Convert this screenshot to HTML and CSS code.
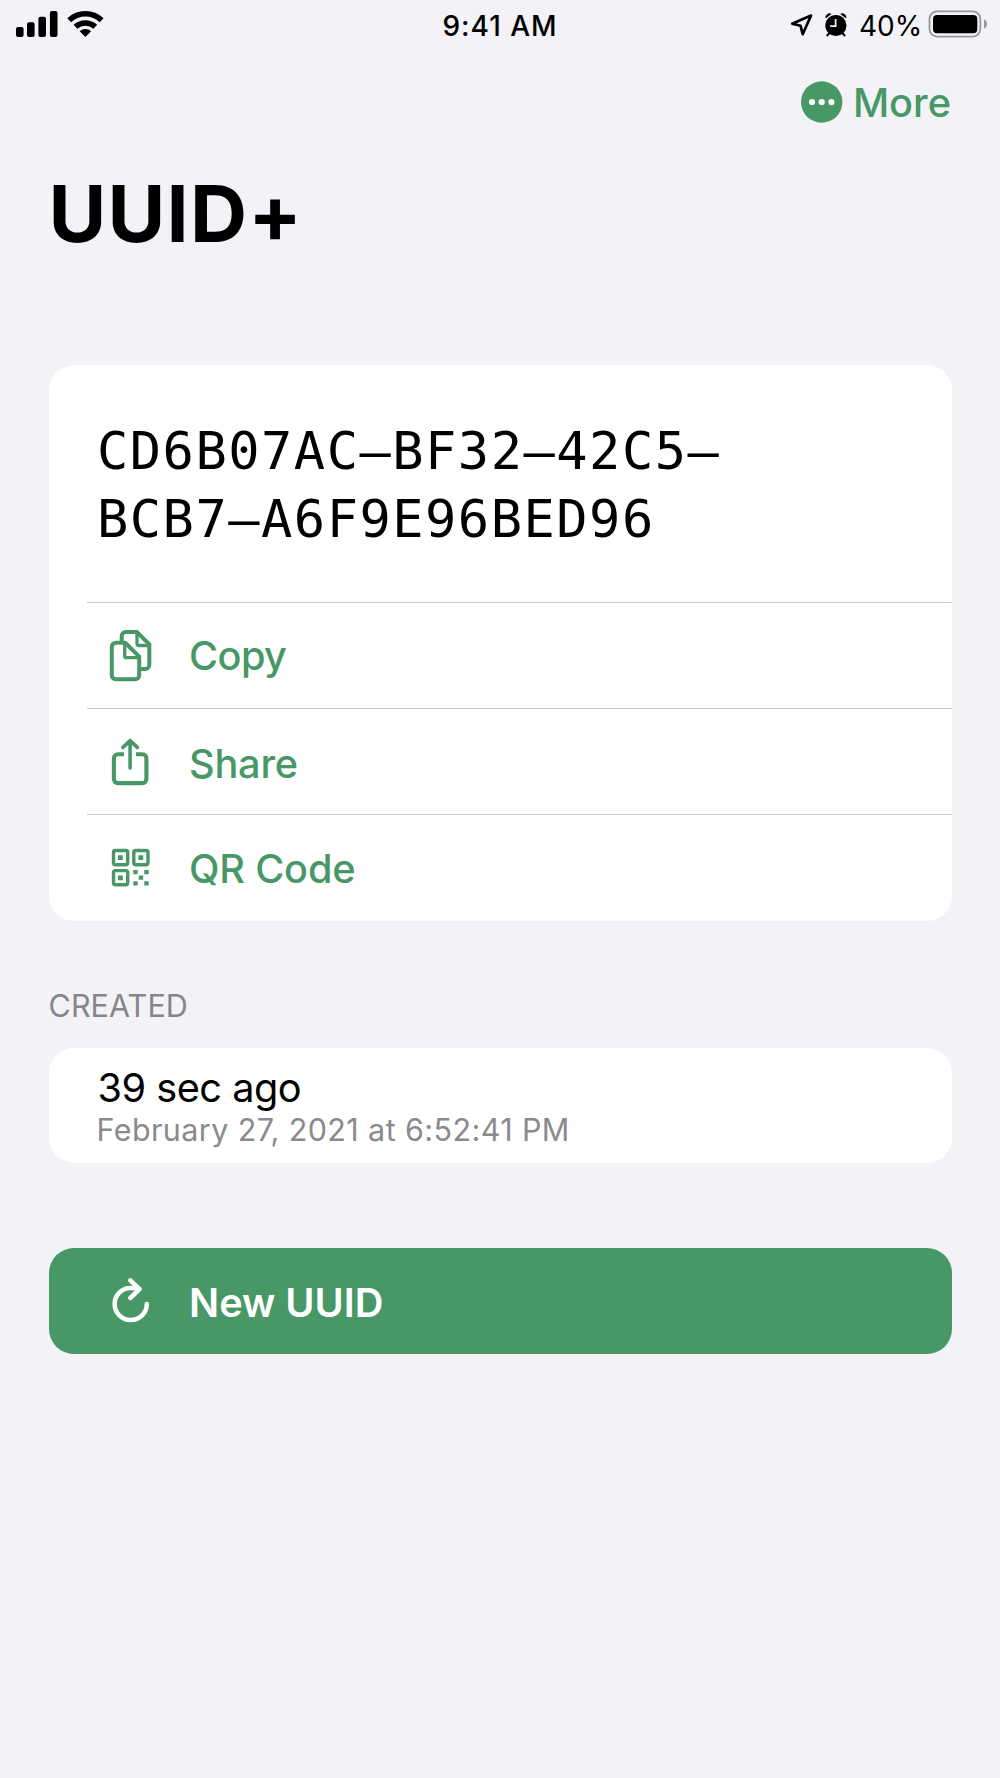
FILE: index.html
```html
<!DOCTYPE html>
<html lang="en">
<head>
    <meta charset="UTF-8">
    <meta name="viewport" content="width=device-width, initial-scale=1.0">
    <title>UUID+</title>
    <link rel="stylesheet" href="styles.css">
</head>
<body>
    <div class="status-bar">
        <svg class="signal" width="110" height="50" viewBox="0 0 110 50">
            <rect x="16" y="27" width="7.6" height="10" rx="2"/>
            <rect x="27" y="22.3" width="7.6" height="14.7" rx="2"/>
            <rect x="38.4" y="16.7" width="7.6" height="20.3" rx="2"/>
            <rect x="49.9" y="11" width="7.6" height="26" rx="2"/>
            <path class="wave" d="M69.2 20.2a23.6 23.6 0 0 1 32.4 0M75.5 26.8a14.6 14.6 0 0 1 19.8 0"/>
            <path d="M85.4 37l-5.7-5.7a8.3 8.3 0 0 1 11.4 0z"/>
        </svg>
        <div class="time">9:41 AM</div>
        <div class="status-right">
            <svg width="70" height="50" viewBox="788 0 70 50">
                <path class="location" d="M811 15.6L802.7 34.2L800.6 25.8L792.2 23.7z"/>
                <circle cx="835.9" cy="25.5" r="10.6"/>
                <path d="M825.6 18.6a4 4 0 0 1 6-4.6zM846.2 18.6a4 4 0 0 0-6-4.6z"/>
                <path class="legs" d="M829.5 33l-2.2 2.4M842.3 33l2.2 2.4"/>
                <path class="hands" d="M835.6 19v7.2h-5.4"/>
            </svg>
            <span class="percent">40%</span>
            <svg class="battery" width="62" height="50" viewBox="926 0 62 50">
                <rect class="shell" x="929.5" y="11.4" width="50.8" height="25.2" rx="7.5"/>
                <rect x="933" y="15" width="44.3" height="18.2" rx="4"/>
                <path class="nub" d="M984 19.4q3 1.2 3 4.6t-3 4.6z"/>
            </svg>
        </div>
    </div>

    <div class="nav">
        <svg width="42" height="42" viewBox="0 0 42 42">
            <circle cx="20.7" cy="21" r="20.7" fill="#479866"/>
            <g fill="#fff">
                <circle cx="11" cy="21" r="3.1"/>
                <circle cx="20.7" cy="21" r="3.1"/>
                <circle cx="30.4" cy="21" r="3.1"/>
            </g>
        </svg>
        <span class="more">More</span>
    </div>
    <h1>UUID+</h1>

    <div class="card main-card">
        <div class="uuid">CD6B07AC–BF32–42C5–<br>BCB7–A6F9E96BED96</div>
        <div class="row copy">
            <svg class="icon" viewBox="0 0 60 60" stroke-width="4">
                <path d="M15.8 17.8h9.4L39.2 31.5V50.2a4 4 0 0 1-4 4H15.8a4 4 0 0 1-4-4V21.8a4 4 0 0 1 4-4z"/>
                <path d="M24.7 18v12.7a2 2 0 0 0 2 2H39" stroke-width="3.3"/>
                <path d="M21.7 17V11a4 4 0 0 1 4-4h11.2L49.3 19.4V40a4 4 0 0 1-4 4H40"/>
                <path d="M37 7.5v11a2 2 0 0 0 2 2h10" stroke-width="3.3"/>
            </svg>
            <span>Copy</span>
        </div>
        <div class="row share">
            <svg class="icon" viewBox="0 0 60 60" stroke-width="4.1">
                <path d="M24 23.2h-6.1a4 4 0 0 0-4 4v20.9a4 4 0 0 0 4 4h24.5a4 4 0 0 0 4-4V27.2a4 4 0 0 0-4-4H36"/>
                <path d="M30.1 37V10.2M22.9 16.4l7.2-6.8 7.2 6.8" stroke-width="3.6" stroke-linecap="round" stroke-linejoin="round"/>
            </svg>
            <span>Share</span>
        </div>
        <div class="row qr">
            <svg class="icon" viewBox="0 0 60 60" stroke-width="3.4">
                <rect x="13.5" y="13.5" width="14.2" height="14.2" rx="2"/>
                <rect x="33.8" y="13.5" width="14.2" height="14.2" rx="2"/>
                <rect x="13.5" y="33.6" width="14.2" height="14.2" rx="2"/>
                <path class="dots" d="M18 18.2h4.8v4.8H18zM38.4 18.2h4.8v4.8h-4.8zM18 38.4h4.8v4.8H18zM33.3 33h4.4v4.2h-4.4zM44.3 33h4.4v4.2h-4.4zM38.8 38.6h4.4v4.2h-4.4zM33.3 44.2h4.4v4.2h-4.4zM44.3 44.2h4.4v4.2h-4.4z"/>
            </svg>
            <span>QR Code</span>
        </div>
    </div>

    <div class="section-title">CREATED</div>
    <div class="card created">
        <div class="ago">39 sec ago</div>
        <div class="date">February 27, 2021 at 6:52:41 PM</div>
    </div>

    <div class="new-uuid">
        <svg class="icon" viewBox="0 0 60 60" stroke-width="4.5" stroke-linecap="round" stroke-linejoin="round">
            <path d="M46.8 33a16.1 16.1 0 1 1-16.1-16.1q4.5 0 8.5.8"/>
            <path d="M30.3 9.3l9.3 8.8-9.3 8.9"/>
        </svg>
        <span>New UUID</span>
    </div>
</body>
</html>
```
FILE: styles.css
```css
*{
    box-sizing: border-box;
}
body{
    margin: 0;
    background-color: #f2f2f7;
    color: #000;
    font-family: Inter, "Liberation Sans", sans-serif;
}
svg{
    display: block;
    flex: none;
}
.status-bar{
    display: grid;
    grid-template-columns: 1fr auto 1fr;
    height: 50px;
    line-height: 52px;
    font-size: 28px;
}
.wave{
    fill: none;
    stroke: #000;
    stroke-width: 5.6;
}
.time{
    font-weight: 500;
    letter-spacing: 0.95px;
}
.status-right{
    display: flex;
    justify-content: flex-end;
    padding-right: 12px;
}
.percent{
    width: 68px;
    padding-left: 1px;
}
.location{
    fill: none;
    stroke: #000;
    stroke-width: 2.7;
    stroke-linejoin: round;
}
.legs{
    stroke: #000;
    stroke-width: 2;
    stroke-linecap: round;
}
.hands{
    fill: none;
    stroke: #f2f2f7;
    stroke-width: 1.8;
}
.shell{
    fill: none;
    stroke: #97979b;
    stroke-width: 1.8;
}
.nub{
    fill: #97979b;
}
.nav{
    display: flex;
    align-items: center;
    justify-content: flex-end;
    height: 104px;
    padding-right: 49px;
    color: #479866;
}
.more{
    margin-left: 10px;
    padding-top: 2px;
    font-size: 39.7px;
    font-weight: 500;
}
h1{
    margin: 0 0 0 48.5px;
    height: 211px;
    line-height: 118px;
    font-size: 79px;
    font-weight: 700;
    letter-spacing: 1.2px;
    font-feature-settings: "calt" 0;
}
.card{
    margin: 0 48.5px;
    background-color: #fff;
    border-radius: 25px;
    overflow: hidden;
}
.main-card{
    height: 556px;
}
.uuid{
    height: 237px;
    padding: 53px 0 0 48.5px;
    font-family: "DejaVu Sans Mono", monospace;
    font-size: 52px;
    line-height: 67.6px;
    letter-spacing: 1.5px;
}
.row{
    display: flex;
    align-items: center;
    height: 106px;
    margin-left: 38.5px;
    padding-left: 13px;
    border-top: 1px solid #c8c8ca;
    color: #479866;
    font-size: 39.7px;
    font-weight: 500;
    letter-spacing: -0.2px;
}
.icon{
    width: 60px;
    height: 60px;
    margin-right: 29px;
    fill: none;
    stroke: currentColor;
}
.row .icon{
    margin-bottom: 2px;
}
.copy span{
    letter-spacing: -0.6px;
}
.share span{
    padding-top: 4px;
}
.qr span{
    padding-top: 2px;
}
.dots{
    fill: currentColor;
    stroke: none;
}
.section-title{
    height: 127px;
    padding: 66px 0 0 48.5px;
    color: #85858a;
    font-size: 30.5px;
    line-height: 37px;
    letter-spacing: 0.1px;
}
.created{
    height: 115px;
    padding: 17px 0 0 49px;
}
.ago{
    font-size: 39.7px;
    line-height: 46px;
    letter-spacing: -0.5px;
}
.date{
    margin-left: -1px;
    color: #8a8a8e;
    font-size: 30.5px;
    line-height: 38px;
    letter-spacing: 0.4px;
}
.new-uuid{
    display: flex;
    align-items: center;
    height: 106px;
    margin: 85px 48.5px 0;
    padding-left: 51.5px;
    border-radius: 25px;
    background-color: #479866;
    color: #fff;
    font-size: 39.7px;
    font-weight: 600;
}
.new-uuid span{
    padding-top: 4px;
}
```
